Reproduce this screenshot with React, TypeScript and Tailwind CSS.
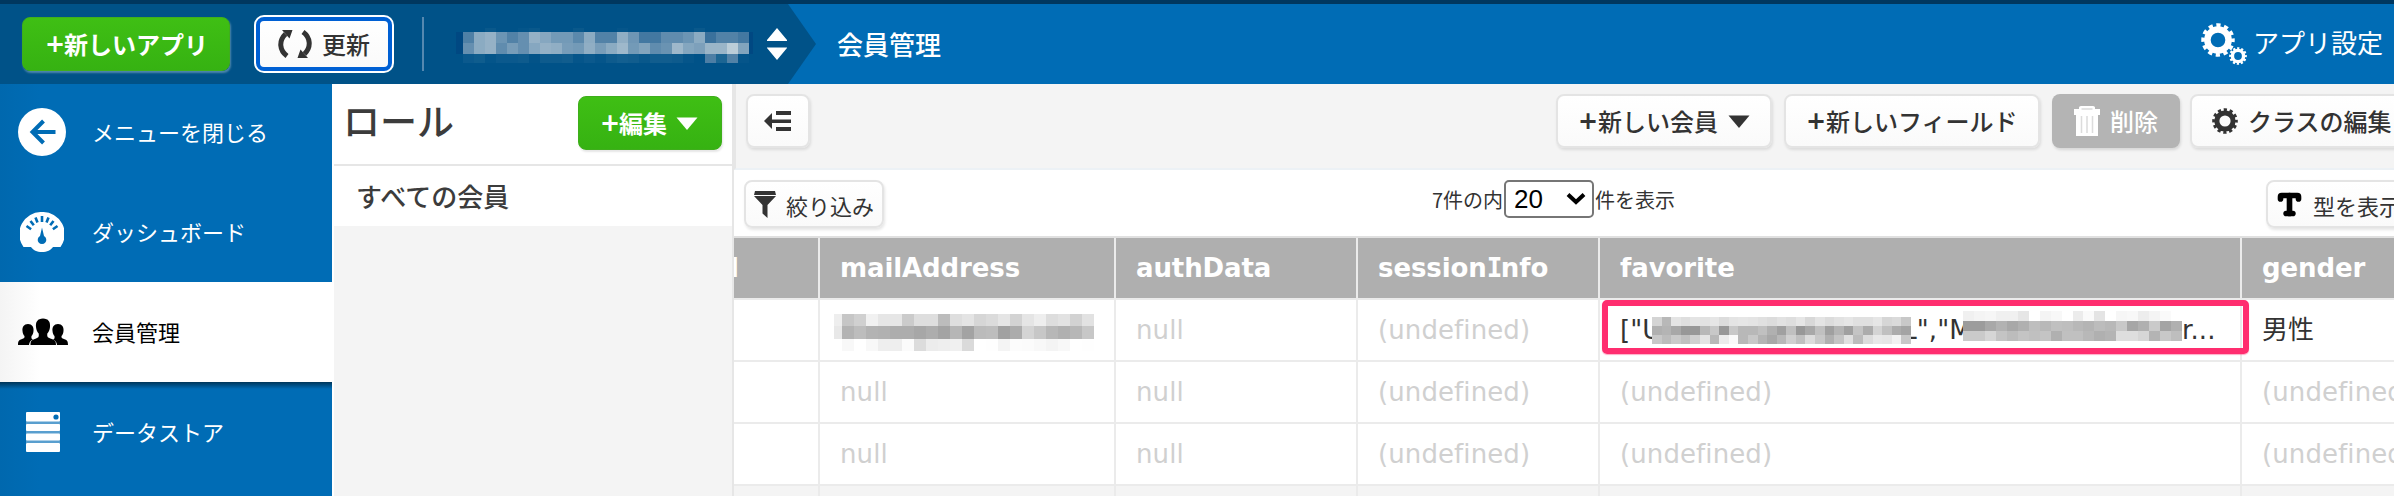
import type { ReactNode } from "react";
import { Type } from "lucide-react";

const APP_NAME_MOSAIC = [
  { h: 4, cells: [0, 0, 6, 0, 0, 3, 6, 0, 0, 0, 6, 0, 0, 0, 4, 0, 0, 0, 0, 0, 0, 6, 0, 0, 0, 0] },
  { h: 11, cells: [33, 58, 62, 45, 34, 42, 62, 56, 48, 48, 38, 58, 34, 34, 60, 46, 28, 28, 40, 40, 45, 58, 24, 34, 34, 28] },
  { h: 11, cells: [42, 58, 62, 40, 50, 42, 56, 62, 60, 50, 48, 60, 50, 58, 66, 48, 54, 40, 44, 66, 55, 52, 64, 64, 78, 54] },
  { h: 9, cells: [8, 11, 3, 8, 8, 10, 2, 10, 10, 12, 4, 8, 4, 10, 14, 12, 6, 12, 12, 10, 4, 0, 32, 20, 34, 4] },
];

const MAIL_MOSAIC = [
  ["#eee", "#c6c6c6", "#d0d0d0", "#f1f1f1", "#e6e6e6", "#e6e6e6", "#cbcbcb", "#dedede", "#dedede", "#bcbcbc", "#dedede", "#e4e4e4", "#d6d6d6", "#dbdbdb", "#e5e5e5", "#d3d3d3", "#e5e5e5", "#eee", "#ddd", "#e2e2e2", "#d2d2d2", "#e2e2e2"],
  ["#e8e8e8", "#b3b3b3", "#bdbdbd", "#b3b3b3", "#b1b1b1", "#adadad", "#adadad", "#a7a7a7", "#adadad", "#a3a3a3", "#b6b6b6", "#a3a3a3", "#bbb", "#bdbdbd", "#a1a1a1", "#acacac", "#d4d4d4", "#c7c7c7", "#b7b7b7", "#b0b0b0", "#b7b7b7", "#c7c7c7"],
  ["#fff", "#f8f8f8", "#fff", "#f8f8f8", "#eee", "#eee", "#fbfbfb", "#dcdcdc", "#ececec", "#eee", "#f0f0f0", "#dadada", "#fff", "#fefefe", "#f4f4f4", "#fcfcfc", "#fbfbfb", "#f8f8f8", "#f4f4f4", "#f8f8f8", "#fff", "#fefefe"],
];

const FAV_A = [
  ["#d4d4d4", "#b8b8b8", "#e4e4e4", "#dedede", "#e4e4e4", "#e2e2e2", "#e6e6e6", "#dcdcdc", "#e4e4e4", "#e6e6e6", "#e4e4e4", "#e0e0e0", "#dcdcdc", "#e2e2e2", "#dedede", "#e6e6e6", "#d8d8d8", "#e4e4e4", "#dcdcdc", "#e2e2e2", "#e6e6e6", "#e0e0e0", "#e0e0e0", "#e6e6e6", "#d6d6d6", "#dadada", "#c8c8c8"],
  ["#b0b0b0", "#b4b4b4", "#a8a8a8", "#989898", "#989898", "#b8b8b8", "#c8c8c8", "#989898", "#c8c8c8", "#b8b8b8", "#b8b8b8", "#c0c0c0", "#b0b0b0", "#a0a0a0", "#c0c0c0", "#989898", "#a8a8a8", "#c0c0c0", "#a0a0a0", "#b4b4b4", "#a0a0a0", "#c4c4c4", "#acacac", "#d4d4d4", "#c0c0c0", "#acacac", "#a4a4a4"],
  ["#c8c8c8", "#bcbcbc", "#cacaca", "#c0c0c0", "#d0d0d0", "#e4e4e4", "#b8b8b8", "#ececec", "#fafafa", "#b8b8b8", "#c8c8c8", "#b4b4b4", "#a8a8a8", "#b8b8b8", "#d0d0d0", "#c0c0c0", "#dcdcdc", "#c8c8c8", "#b0b0b0", "#c4c4c4", "#e0e0e0", "#bcbcbc", "#dcdcdc", "#e8e8e8", "#e6e6e6", "#f2f2f2", "#c8c8c8"],
];

const FAV_B = [
  ["#f0f0f0", "#f4f4f4", "#f6f6f6", "#f0f0f0", "#f0f0f0", "#e6e6e6", "#fff", "#f4f4f4", "#f8f8f8", "#fff", "#ececec", "#fafafa", "#e4e4e4", "#fff", "#f6f6f6", "#f8f8f8", "#ededed", "#f4f4f4", "#fafafa", "#fff"],
  ["#9c9c9c", "#9c9c9c", "#a8a8a8", "#b2b2b2", "#a8a8a8", "#b0b0b0", "#bebebe", "#b8b8b8", "#c0c0c0", "#bebebe", "#b8b8b8", "#b4b4b4", "#bcbcbc", "#b8b8b8", "#c8c8c8", "#a6a6a6", "#b0b0b0", "#cacaca", "#a4a4a4", "#b0b0b0"],
  ["#cacaca", "#cacaca", "#d6d6d6", "#c4c4c4", "#bcbcbc", "#c4c4c4", "#c0c0c0", "#c4c4c4", "#b0b0b0", "#c0c0c0", "#c0c0c0", "#b8b8b8", "#b0b0b0", "#b4b4b4", "#dedede", "#dedede", "#d6d6d6", "#b4b4b4", "#c8c8c8", "#bebebe"],
];

function Mosaic({ rows, width, height, first }: { rows: string[][]; width: number; height: number; first?: number }) {
  const lead = first ?? 0;
  const n = rows[0].length - (lead ? 1 : 0);
  const cw = (width - lead) / n;
  const ch = height / rows.length;
  return (
    <svg width={width} height={height} shapeRendering="crispEdges" className="block shrink-0">
      {rows.map((r, y) =>
        r.map((c, i) => {
          const x = lead ? (i === 0 ? 0 : lead + (i - 1) * cw) : i * cw;
          return <rect key={`${y}-${i}`} x={x} y={y * ch} width={lead && i === 0 ? lead : cw + 0.5} height={ch + 0.5} fill={c} />;
        }),
      )}
    </svg>
  );
}

function AppNameMosaic() {
  let y = 0;
  return (
    <svg width="297" height="35" shapeRendering="crispEdges" className="block shrink-0">
      <rect x="0" y="4" width="297" height="22" fill="#004882" />
      {APP_NAME_MOSAIC.map((r, ri) => {
        const top = y;
        y += r.h;
        return r.cells.map((c, i) => (
          <rect key={`${ri}-${i}`} x={7 + i * 11} y={top} width="11" height={r.h} fill={c > 20 ? `rgb(${c * 2.4},${72 + c * 1.7},${130 + c * 1.1})` : `rgba(70,130,165,${c / 50})`} />
        ));
      })}
    </svg>
  );
}

function Gear({ size, hole = 5.6 }: { size: number; hole?: number }) {
  const outer = 11.2;
  const step = (2 * Math.PI * outer) / 12;
  return (
    <svg width={size} height={size} viewBox="0 0 26 26" fill="none" stroke="currentColor" className="block">
      <circle cx="13" cy="13" r={(hole + 10.6) / 2} strokeWidth={10.6 - hole} />
      <circle cx="13" cy="13" r={outer} strokeWidth="3.2" strokeDasharray={`${step * 0.55} ${step * 0.45}`} strokeDashoffset={step * 0.275} />
    </svg>
  );
}

function Down({ className }: { className: string }) {
  return (
    <svg width="22" height="13" viewBox="0 0 22 13" className={className}>
      <path d="M0.5 0.5H21.5L11 13Z" fill="currentColor" />
    </svg>
  );
}

function Plus() {
  return <span className="w-[19px] shrink-0 font-['DejaVu_Sans'] font-bold tracking-[-2px]">+</span>;
}

const whiteBtn =
  "flex shrink-0 items-center whitespace-nowrap rounded-lg border-2 border-[#e4e4e4] bg-linear-to-b from-white to-[#fafafa] text-[#333] shadow-[1px_2px_3px_rgba(0,0,0,0.1)]";

function MenuItem({ icon, label, active }: { icon: ReactNode; label: string; active?: boolean }) {
  return (
    <div className={active ? "flex h-[100px] shrink-0 items-center bg-linear-to-r from-[#f4f4f4] to-white to-[40px] text-black" : "flex h-[100px] shrink-0 items-center text-white"}>
      <div className="flex w-[92px] shrink-0 items-center">{icon}</div>
      <span className="mb-[3px] text-[22px] leading-none font-normal">{label}</span>
    </div>
  );
}

function Person() {
  return (
    <svg width="52" height="28" viewBox="0 0 52 28" fill="currentColor" className="ml-[17px] block">
      <path d="M11 6c4 0 6 3 5.500 7c-.2 2.500-1 4-2 5c-.3 2.500 0 3 1.500 3.500c-2.500 1-3.600 2.500-4 5.500H1c0-4 1-5 4-6c2-.7 2.700-1 2.500-3c-1-1-1.800-2.500-2-5c-.5-4 1.500-7 5.500-7Z" />
      <path d="M41 6c-4 0-6 3-5.500 7c.2 2.500 1 4 2 5c.3 2.500 0 3-1.500 3.500c2.500 1 3.600 2.500 4 5.500H51c0-4-1-5-4-6c-2-.7-2.700-1-2.500-3c1-1 1.800-2.500 2-5c.5-4-1.500-7-5.500-7Z" />
      <path d="M26 .5c5.500 0 7.500 3.500 7 8.500c-.3 3-1.200 5-2.700 6.500c-.3 3.500.2 4 3.700 5.200c4 1.200 5 2.300 5 6.300H13.500c0-4 1-5.100 5-6.300c3.300-1.200 3.500-1.700 3.200-5.200c-1.500-1.500-2.400-3.500-2.700-6.500c-.5-5 1.500-8.500 7-8.500Z" />
    </svg>
  );
}

function Gauge() {
  return (
    <svg width="44" height="40" viewBox="0 0 44 40" className="ml-[20px] block">
      <path d="M22 0A22 22 0 0 1 40.500 35H33C31 38 27 40 22 40S13 38 11 35H3.500A22 22 0 0 1 22 0Z" fill="#fff" />
      <g stroke="#006cb5" strokeWidth="2.600">
        <path d="M22 4v6M15.500 5.500l2 5M28.500 5.500l-2 5M10.500 9l3.300 4.300M33.500 9l-3.300 4.300M6.500 14l4.600 3.200M37.500 14l-4.600 3.200" />
      </g>
      <path d="M22 15.500l2 8.500a4.300 4.300 0 1 1-4 0Z" fill="#006cb5" />
    </svg>
  );
}

function Cell({ w, children, head }: { w: string; children?: ReactNode; head?: boolean }) {
  return (
    <div
      className={
        head
          ? `${w} flex h-full shrink-0 items-center overflow-hidden border-r-2 border-[#ebebeb] pl-5 font-bold tracking-[-0.1px]`
          : `${w} flex h-full shrink-0 items-center overflow-hidden border-r-2 border-[#ebebeb] pl-5 tracking-[0.1px]`
      }
    >
      {children}
    </div>
  );
}

const W = ["w-[86px]", "w-[296px]", "w-[242px]", "w-[242px]", "w-[642px]", "w-[242px]"];

function EmptyRow() {
  return (
    <div className="flex h-[62px] shrink-0 border-b-2 border-[#ebebeb] bg-white text-[#d0d0d0]">
      <Cell w={W[0]} />
      <Cell w={W[1]}>null</Cell>
      <Cell w={W[2]}>null</Cell>
      <Cell w={W[3]}>(undefined)</Cell>
      <Cell w={W[4]}>(undefined)</Cell>
      <Cell w={W[5]}>(undefined)</Cell>
    </div>
  );
}

export default function App() {
  return (
    <div className="flex h-[496px] w-[2394px] flex-col overflow-hidden bg-[#f4f4f4] font-['Noto_Sans_CJK_JP',sans-serif] font-medium leading-none text-[#333]">
      <header className="flex h-[84px] shrink-0 border-t-4 border-[#00375f] bg-[#006cb5] text-white">
        <div className="flex w-[788px] shrink-0 items-center bg-[#005288]">
          <div className="ml-[22px] flex h-[54px] w-[208px] items-center rounded-lg border border-[#3fae1c] bg-linear-to-b from-[#3fbf14] to-[#36b212] pl-[22px] text-[24px] font-bold whitespace-nowrap shadow-[1px_2px_2px_rgba(255,255,255,0.3)]">
            <Plus />
            <span>新しいアプリ</span>
          </div>
          <div className="ml-6 h-[58px] w-[140px] rounded-[10px] bg-white p-[2px]">
            <div className="flex h-full items-center rounded-lg border-4 border-[#0060d4] bg-linear-to-b from-white to-[#fafafa] text-[24px] text-[#333]">
              <svg width="34" height="28" viewBox="0 0 34 28" fill="none" className="ml-[18px] block">
                <path d="M9 26C1.500 20.500 .5 11 7.500 4M25 2C32.500 7.500 33.500 17 26.500 24" stroke="#333" strokeWidth="5" />
                <path d="M4 0H14.500L11.500 8.500ZM30 28H19.500L22.500 19.500Z" fill="#333" />
              </svg>
              <span className="mb-px ml-[10px]">更新</span>
            </div>
          </div>
          <div className="ml-7 h-[54px] w-[2px] bg-[#5588b0]" />
          <div className="ml-8 mt-[3px]">
            <AppNameMosaic />
          </div>
          <svg width="20" height="32" viewBox="0 0 20 32" fill="#fff" className="ml-[14px] block">
            <path d="M10 0L20 12V13H0V12ZM10 32L20 20V19.500H0V20Z" />
          </svg>
        </div>
        <svg width="28" height="80" viewBox="0 0 28 80" className="block shrink-0">
          <path d="M0 0L28 40L0 80Z" fill="#005288" />
        </svg>
        <div className="flex flex-1 items-center justify-between pl-[21px]">
          <span className="text-[26px]">会員管理</span>
          <div className="flex items-center">
            <div className="relative mb-px h-[42px] w-[52px]">
              <Gear size={34} />
              <div className="absolute top-[24px] left-[28px]">
                <Gear size={18} />
              </div>
            </div>
            <span className="mr-[11px] mb-1 text-[26px] font-normal">アプリ設定</span>
          </div>
        </div>
      </header>

      <div className="flex min-h-0 flex-1">
        <nav className="flex w-[332px] shrink-0 flex-col overflow-hidden bg-linear-to-r from-[#0068ae] to-[#006cb5] to-[40px]">
          <div className="-mt-[2px] flex flex-col">
            <MenuItem
              label="メニューを閉じる"
              icon={
                <svg width="48" height="48" viewBox="0 0 48 48" fill="none" className="ml-[18px] block">
                  <circle cx="24" cy="24" r="24" fill="#fff" />
                  <path d="M37.500 24H15M25.500 13L14.500 24L25.500 35" stroke="#006cb5" strokeWidth="4" />
                </svg>
              }
            />
            <MenuItem label="ダッシュボード" icon={<Gauge />} />
            <MenuItem label="会員管理" active icon={<Person />} />
            <div className="-mb-[7px] h-[7px] bg-linear-to-b from-black/50 to-transparent" />
            <MenuItem
              label="データストア"
              icon={
                <svg width="34" height="40" viewBox="0 0 34 40" fill="#fff" className="ml-[26px] block">
                  <rect width="34" height="9.500" rx="1" />
                  <rect y="12" width="34" height="7" rx="1" />
                  <rect y="21.500" width="34" height="7" rx="1" />
                  <rect y="31" width="34" height="9" rx="1" />
                  <path d="M0 9h34v22H0Z" fillOpacity=".35" />
                  <circle cx="30" cy="5" r="2.600" fill="#006cb5" />
                </svg>
              }
            />
          </div>
        </nav>

        <section className="flex w-[402px] shrink-0 flex-col border-r-2 border-l-2 border-r-[#e6e6e6] border-l-white">
          <div className="flex h-[82px] shrink-0 items-center justify-between border-b-2 border-[#e6e6e6] bg-white pr-[10px] pl-[9px]">
            <h1 className="mb-[7px] text-[37px] font-medium text-[#3c3c3c]">ロール</h1>
            <div className="mb-[2px] flex h-[54px] w-[144px] items-center rounded-lg border border-[#3fae1c] bg-linear-to-b from-[#3fbf14] to-[#36b212] pl-[21px] text-[24px] font-bold text-white shadow-[1px_2px_2px_rgba(0,0,0,0.1)]">
              <Plus />
              <span>編集</span>
              <Down className="ml-[9px]" />
            </div>
          </div>
          <div className="flex h-[60px] shrink-0 items-center bg-white pl-[22px] text-[26px] text-[#3c3c3c]">すべての会員</div>
        </section>

        <main className="flex min-w-0 flex-1 flex-col overflow-hidden">
          <div className="flex h-[86px] shrink-0 items-start border-b-2 border-l-2 border-b-[#ecf1f5] border-l-[#e6e6e6] pt-[10px] pl-[10px] text-[24px]">
            <div className={`${whiteBtn} h-[54px] w-[64px] justify-center`}>
              <svg width="27" height="20" viewBox="0 0 27 20" fill="#333" className="-ml-[2px] block">
                <path d="M0 10L8 2V8.500H27V12H8V18ZM12 0H27V4H12ZM12 16H27V20H12Z" />
              </svg>
            </div>
            <div className={`${whiteBtn} ml-[746px] h-[54px] w-[216px] pl-[20px]`}>
              <Plus />
              <span className="ml-px">新しい会員</span>
              <Down className="ml-[10px]" />
            </div>
            <div className={`${whiteBtn} ml-3 h-[54px] w-[256px] pl-[20px]`}>
              <Plus />
              <span className="ml-px">新しいフィールド</span>
            </div>
            <div className="ml-3 flex h-[54px] w-[128px] shrink-0 items-center rounded-lg bg-[#b4b4b4] pl-[22px] text-white shadow-[1px_2px_3px_rgba(0,0,0,0.12)]">
              <svg width="26" height="30" viewBox="0 0 26 30" className="block">
                <path d="M0 3H5V1.500Q5 0 7 0H19Q21 0 21 1.500V3H26V9H24V30H2V9H0Z" fill="#fff" />
                <path d="M7.500 3H18.500M7.500 10V27M13 10V27M18.500 10V27" stroke="#dcdcdc" strokeWidth="1.500" />
              </svg>
              <span className="ml-[10px]">削除</span>
            </div>
            <div className={`${whiteBtn} ml-[10px] h-[54px] w-[230px] pl-[20px]`}>
              <Gear size={26} />
              <span className="ml-[10px]">クラスの編集</span>
            </div>
          </div>

          <div className="flex h-[68px] shrink-0 items-start border-b-2 border-[#e0e0e0] bg-white pt-[10px] pl-[10px] font-normal">
            <div className={`${whiteBtn} h-12 w-[140px] pl-2 text-[22px]`}>
              <svg width="22" height="27" viewBox="0 0 22 27" fill="#333" className="block">
                <path d="M1 0H21L22 4H0ZM0 5H22L13.500 14V27L8.500 22.500V14Z" />
              </svg>
              <span className="ml-[10px] mt-px">絞り込み</span>
            </div>
            <div className="ml-[548px] flex h-[38px] shrink-0 items-center text-[20px] whitespace-nowrap">
              <span className="mt-[2px] w-[72px]">7件の内</span>
              <div className="flex h-[38px] w-[90px] items-center justify-between rounded-[5px] border-2 border-[#767676] bg-white pr-[6px] pl-2 font-['Liberation_Sans'] text-[26px] text-black">
                <span>20</span>
                <svg width="20" height="14" viewBox="0 0 20 14" fill="none" className="block">
                  <path d="M2 2.500L10 10L18 2.500" stroke="#000" strokeWidth="4" />
                </svg>
              </div>
              <span className="mt-[2px] ml-px">件を表示</span>
            </div>
            <div className={`${whiteBtn} ml-[591px] h-12 w-[160px] pl-[9px] text-[22px]`}>
              <Type size={27} strokeWidth={5} className="-mx-px shrink-0 text-black" />
              <span className="ml-[11px] mt-px">型を表示</span>
            </div>
          </div>

          <div className="relative flex shrink-0 flex-col font-['DejaVu_Sans','Noto_Sans_CJK_JP',sans-serif] text-[26px] font-normal whitespace-nowrap">
            <div className="flex h-[62px] shrink-0 border-b-2 border-[#ebebeb] bg-[#afafaf] text-white">
              <Cell w={W[0]} head>
                <span className="-ml-6">l</span>
              </Cell>
              <Cell w={W[1]} head>mailAddress</Cell>
              <Cell w={W[2]} head>authData</Cell>
              <Cell w={W[3]} head>
                <span>
                  session<span className="font-['DejaVu_Sans_Mono'] tracking-[-1.5px]">I</span>nfo
                </span>
              </Cell>
              <Cell w={W[4]} head>favorite</Cell>
              <Cell w={W[5]} head>gender</Cell>
            </div>
            <div className="flex h-[62px] shrink-0 border-b-2 border-[#ebebeb] bg-white text-[#d0d0d0]">
              <Cell w={W[0]} />
              <Cell w={W[1]}>
                <div className="-ml-[6px] mt-[5px]">
                  <Mosaic rows={MAIL_MOSAIC} width={260} height={37} first={8} />
                </div>
              </Cell>
              <Cell w={W[2]}>null</Cell>
              <Cell w={W[3]}>(undefined)</Cell>
              <Cell w={W[4]}>
                <div className="flex items-center text-[#333]">
                  <span className="w-[32px] shrink-0 overflow-hidden py-1">["U</span>
                  <Mosaic rows={FAV_A} width={259} height={27} />
                  <span className="flex w-[52px] shrink-0 justify-center overflow-hidden py-1">L","M</span>
                  <div className="-mt-[9px]">
                    <Mosaic rows={FAV_B} width={219} height={30} />
                  </div>
                  <span>r...</span>
                </div>
              </Cell>
              <Cell w={W[5]}>
                <span className="text-[#333]">男性</span>
              </Cell>
            </div>
            <EmptyRow />
            <EmptyRow />
            <div className="flex h-[10px] shrink-0">
              {W.map((w, i) => (
                <Cell key={i} w={w} />
              ))}
            </div>
            <div className="absolute top-[62px] left-[868px] h-[54px] w-[647px] rounded-[5px] border-6 border-[#ff2d6f] shadow-[0_1px_1px_rgba(255,45,111,0.4)]" />
          </div>
        </main>
      </div>
    </div>
  );
}
